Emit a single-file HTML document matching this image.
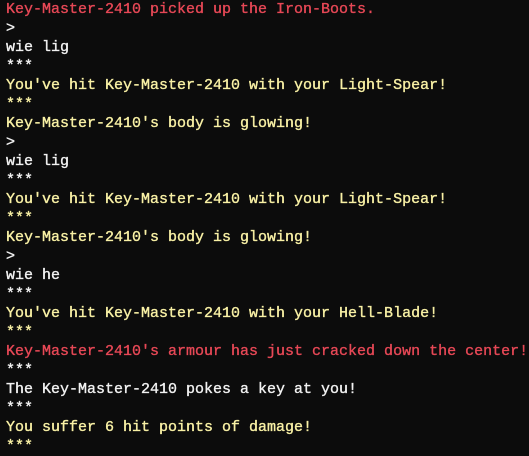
<html><head><style>
body{margin:0;background:#0c0c0c;width:529px;height:451px;overflow:hidden}
pre{margin:0;padding:0 0 0 6px;font-family:"Liberation Mono",monospace;font-size:15px;line-height:19px;color:#f2f2f2;white-space:pre;-webkit-text-stroke:0.35px currentColor}
.r{color:#e74856}.y{color:#f9f1a5}
</style></head><body><pre><span class="r">Key-Master-2410 picked up the Iron-Boots.</span>
&gt;
wie lig
***
<span class="y">You've hit Key-Master-2410 with your Light-Spear!</span>
<span class="y">***</span>
<span class="y">Key-Master-2410's body is glowing!</span>
&gt;
wie lig
***
<span class="y">You've hit Key-Master-2410 with your Light-Spear!</span>
<span class="y">***</span>
<span class="y">Key-Master-2410's body is glowing!</span>
&gt;
wie he
***
<span class="y">You've hit Key-Master-2410 with your Hell-Blade!</span>
<span class="y">***</span>
<span class="r">Key-Master-2410's armour has just cracked down the center!</span>
***
The Key-Master-2410 pokes a key at you!
***
<span class="y">You suffer 6 hit points of damage!</span>
<span class="y">***</span></pre></body></html>
